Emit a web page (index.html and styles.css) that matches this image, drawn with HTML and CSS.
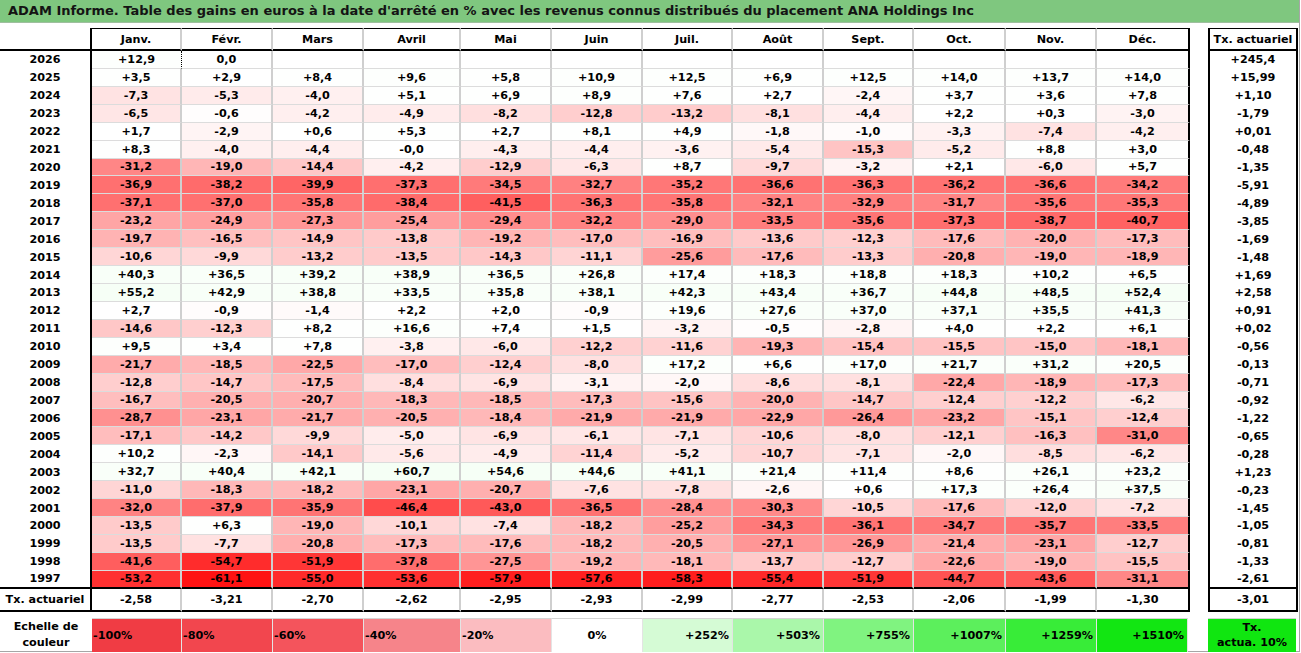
FILE: index.html
```html
<!DOCTYPE html>
<html lang="fr">
<head>
<meta charset="utf-8">
<title>ADAM Informe</title>
<link rel="stylesheet" href="styles.css">
</head>
<body>
<div class="sheet">
  <div class="title">ADAM Informe. Table des gains en euros à la date d'arrêté en % avec les revenus connus distribués du placement ANA Holdings Inc</div>
  <div class="main">
    <div class="row head"><div class="yr"></div><div class="h">Janv.</div><div class="h">Févr.</div><div class="h">Mars</div><div class="h">Avril</div><div class="h">Mai</div><div class="h">Juin</div><div class="h">Juil.</div><div class="h">Août</div><div class="h">Sept.</div><div class="h">Oct.</div><div class="h">Nov.</div><div class="h">Déc.</div><div class="t">Tx. actuariel</div></div>
    <div class="row"><div class="yr">2026</div><div class="v dot">+12,9</div><div class="v">0,0</div><div class="v"></div><div class="v"></div><div class="v"></div><div class="v"></div><div class="v"></div><div class="v"></div><div class="v"></div><div class="v"></div><div class="v"></div><div class="v"></div><div class="t">+245,4</div></div>
    <div class="row"><div class="yr">2025</div><div class="v">+3,5</div><div class="v">+2,9</div><div class="v">+8,4</div><div class="v">+9,6</div><div class="v">+5,8</div><div class="v">+10,9</div><div class="v">+12,5</div><div class="v">+6,9</div><div class="v">+12,5</div><div class="v">+14,0</div><div class="v">+13,7</div><div class="v">+14,0</div><div class="t">+15,99</div></div>
    <div class="row"><div class="yr">2024</div><div class="v">-7,3</div><div class="v">-5,3</div><div class="v">-4,0</div><div class="v">+5,1</div><div class="v">+6,9</div><div class="v">+8,9</div><div class="v">+7,6</div><div class="v">+2,7</div><div class="v">-2,4</div><div class="v">+3,7</div><div class="v">+3,6</div><div class="v">+7,8</div><div class="t">+1,10</div></div>
    <div class="row"><div class="yr">2023</div><div class="v">-6,5</div><div class="v">-0,6</div><div class="v">-4,2</div><div class="v">-4,9</div><div class="v">-8,2</div><div class="v">-12,8</div><div class="v">-13,2</div><div class="v">-8,1</div><div class="v">-4,4</div><div class="v">+2,2</div><div class="v">+0,3</div><div class="v">-3,0</div><div class="t">-1,79</div></div>
    <div class="row"><div class="yr">2022</div><div class="v">+1,7</div><div class="v">-2,9</div><div class="v">+0,6</div><div class="v">+5,3</div><div class="v">+2,7</div><div class="v">+8,1</div><div class="v">+4,9</div><div class="v">-1,8</div><div class="v">-1,0</div><div class="v">-3,3</div><div class="v">-7,4</div><div class="v">-4,2</div><div class="t">+0,01</div></div>
    <div class="row"><div class="yr">2021</div><div class="v">+8,3</div><div class="v">-4,0</div><div class="v">-4,4</div><div class="v">-0,0</div><div class="v">-4,3</div><div class="v">-4,4</div><div class="v">-3,6</div><div class="v">-5,4</div><div class="v">-15,3</div><div class="v">-5,2</div><div class="v">+8,8</div><div class="v">+3,0</div><div class="t">-0,48</div></div>
    <div class="row"><div class="yr">2020</div><div class="v">-31,2</div><div class="v">-19,0</div><div class="v">-14,4</div><div class="v">-4,2</div><div class="v">-12,9</div><div class="v">-6,3</div><div class="v">+8,7</div><div class="v">-9,7</div><div class="v">-3,2</div><div class="v">+2,1</div><div class="v">-6,0</div><div class="v">+5,7</div><div class="t">-1,35</div></div>
    <div class="row"><div class="yr">2019</div><div class="v">-36,9</div><div class="v">-38,2</div><div class="v">-39,9</div><div class="v">-37,3</div><div class="v">-34,5</div><div class="v">-32,7</div><div class="v">-35,2</div><div class="v">-36,6</div><div class="v">-36,3</div><div class="v">-36,2</div><div class="v">-36,6</div><div class="v">-34,2</div><div class="t">-5,91</div></div>
    <div class="row"><div class="yr">2018</div><div class="v">-37,1</div><div class="v">-37,0</div><div class="v">-35,8</div><div class="v">-38,4</div><div class="v">-41,5</div><div class="v">-36,3</div><div class="v">-35,8</div><div class="v">-32,1</div><div class="v">-32,9</div><div class="v">-31,7</div><div class="v">-35,6</div><div class="v">-35,3</div><div class="t">-4,89</div></div>
    <div class="row"><div class="yr">2017</div><div class="v">-23,2</div><div class="v">-24,9</div><div class="v">-27,3</div><div class="v">-25,4</div><div class="v">-29,4</div><div class="v">-32,2</div><div class="v">-29,0</div><div class="v">-33,5</div><div class="v">-35,6</div><div class="v">-37,3</div><div class="v">-38,7</div><div class="v">-40,7</div><div class="t">-3,85</div></div>
    <div class="row"><div class="yr">2016</div><div class="v">-19,7</div><div class="v">-16,5</div><div class="v">-14,9</div><div class="v">-13,8</div><div class="v">-19,2</div><div class="v">-17,0</div><div class="v">-16,9</div><div class="v">-13,6</div><div class="v">-12,3</div><div class="v">-17,6</div><div class="v">-20,0</div><div class="v">-17,3</div><div class="t">-1,69</div></div>
    <div class="row"><div class="yr">2015</div><div class="v">-10,6</div><div class="v">-9,9</div><div class="v">-13,2</div><div class="v">-13,5</div><div class="v">-14,3</div><div class="v">-11,1</div><div class="v">-25,6</div><div class="v">-17,6</div><div class="v">-13,3</div><div class="v">-20,8</div><div class="v">-19,0</div><div class="v">-18,9</div><div class="t">-1,48</div></div>
    <div class="row"><div class="yr">2014</div><div class="v">+40,3</div><div class="v">+36,5</div><div class="v">+39,2</div><div class="v">+38,9</div><div class="v">+36,5</div><div class="v">+26,8</div><div class="v">+17,4</div><div class="v">+18,3</div><div class="v">+18,8</div><div class="v">+18,3</div><div class="v">+10,2</div><div class="v">+6,5</div><div class="t">+1,69</div></div>
    <div class="row"><div class="yr">2013</div><div class="v">+55,2</div><div class="v">+42,9</div><div class="v">+38,8</div><div class="v">+33,5</div><div class="v">+35,8</div><div class="v">+38,1</div><div class="v">+42,3</div><div class="v">+43,4</div><div class="v">+36,7</div><div class="v">+44,8</div><div class="v">+48,5</div><div class="v">+52,4</div><div class="t">+2,58</div></div>
    <div class="row"><div class="yr">2012</div><div class="v">+2,7</div><div class="v">-0,9</div><div class="v">-1,4</div><div class="v">+2,2</div><div class="v">+2,0</div><div class="v">-0,9</div><div class="v">+19,6</div><div class="v">+27,6</div><div class="v">+37,0</div><div class="v">+37,1</div><div class="v">+35,5</div><div class="v">+41,3</div><div class="t">+0,91</div></div>
    <div class="row"><div class="yr">2011</div><div class="v">-14,6</div><div class="v">-12,3</div><div class="v">+8,2</div><div class="v">+16,6</div><div class="v">+7,4</div><div class="v">+1,5</div><div class="v">-3,2</div><div class="v">-0,5</div><div class="v">-2,8</div><div class="v">+4,0</div><div class="v">+2,2</div><div class="v">+6,1</div><div class="t">+0,02</div></div>
    <div class="row"><div class="yr">2010</div><div class="v">+9,5</div><div class="v">+3,4</div><div class="v">+7,8</div><div class="v">-3,8</div><div class="v">-6,0</div><div class="v">-12,2</div><div class="v">-11,6</div><div class="v">-19,3</div><div class="v">-15,4</div><div class="v">-15,5</div><div class="v">-15,0</div><div class="v">-18,1</div><div class="t">-0,56</div></div>
    <div class="row"><div class="yr">2009</div><div class="v">-21,7</div><div class="v">-18,5</div><div class="v">-22,5</div><div class="v">-17,0</div><div class="v">-12,4</div><div class="v">-8,0</div><div class="v">+17,2</div><div class="v">+6,6</div><div class="v">+17,0</div><div class="v">+21,7</div><div class="v">+31,2</div><div class="v">+20,5</div><div class="t">-0,13</div></div>
    <div class="row"><div class="yr">2008</div><div class="v">-12,8</div><div class="v">-14,7</div><div class="v">-17,5</div><div class="v">-8,4</div><div class="v">-6,9</div><div class="v">-3,1</div><div class="v">-2,0</div><div class="v">-8,6</div><div class="v">-8,1</div><div class="v">-22,4</div><div class="v">-18,9</div><div class="v">-17,3</div><div class="t">-0,71</div></div>
    <div class="row"><div class="yr">2007</div><div class="v">-16,7</div><div class="v">-20,5</div><div class="v">-20,7</div><div class="v">-18,3</div><div class="v">-18,5</div><div class="v">-17,3</div><div class="v">-15,6</div><div class="v">-20,0</div><div class="v">-14,7</div><div class="v">-12,4</div><div class="v">-12,2</div><div class="v">-6,2</div><div class="t">-0,92</div></div>
    <div class="row"><div class="yr">2006</div><div class="v">-28,7</div><div class="v">-23,1</div><div class="v">-21,7</div><div class="v">-20,5</div><div class="v">-18,4</div><div class="v">-21,9</div><div class="v">-21,9</div><div class="v">-22,9</div><div class="v">-26,4</div><div class="v">-23,2</div><div class="v">-15,1</div><div class="v">-12,4</div><div class="t">-1,22</div></div>
    <div class="row"><div class="yr">2005</div><div class="v">-17,1</div><div class="v">-14,2</div><div class="v">-9,9</div><div class="v">-5,0</div><div class="v">-6,9</div><div class="v">-6,1</div><div class="v">-7,1</div><div class="v">-10,6</div><div class="v">-8,0</div><div class="v">-12,1</div><div class="v">-16,3</div><div class="v">-31,0</div><div class="t">-0,65</div></div>
    <div class="row"><div class="yr">2004</div><div class="v">+10,2</div><div class="v">-2,3</div><div class="v">-14,1</div><div class="v">-5,6</div><div class="v">-4,9</div><div class="v">-11,4</div><div class="v">-5,2</div><div class="v">-10,7</div><div class="v">-7,1</div><div class="v">-2,0</div><div class="v">-8,5</div><div class="v">-6,2</div><div class="t">-0,28</div></div>
    <div class="row"><div class="yr">2003</div><div class="v">+32,7</div><div class="v">+40,4</div><div class="v">+42,1</div><div class="v">+60,7</div><div class="v">+54,6</div><div class="v">+44,6</div><div class="v">+41,1</div><div class="v">+21,4</div><div class="v">+11,4</div><div class="v">+8,6</div><div class="v">+26,1</div><div class="v">+23,2</div><div class="t">+1,23</div></div>
    <div class="row"><div class="yr">2002</div><div class="v">-11,0</div><div class="v">-18,3</div><div class="v">-18,2</div><div class="v">-23,1</div><div class="v">-20,7</div><div class="v">-7,6</div><div class="v">-7,8</div><div class="v">-2,6</div><div class="v">+0,6</div><div class="v">+17,3</div><div class="v">+26,4</div><div class="v">+37,5</div><div class="t">-0,23</div></div>
    <div class="row"><div class="yr">2001</div><div class="v">-32,0</div><div class="v">-37,9</div><div class="v">-35,9</div><div class="v">-46,4</div><div class="v">-43,0</div><div class="v">-36,5</div><div class="v">-28,4</div><div class="v">-30,3</div><div class="v">-10,5</div><div class="v">-17,6</div><div class="v">-12,0</div><div class="v">-7,2</div><div class="t">-1,45</div></div>
    <div class="row"><div class="yr">2000</div><div class="v">-13,5</div><div class="v">+6,3</div><div class="v">-19,0</div><div class="v">-10,1</div><div class="v">-7,4</div><div class="v">-18,2</div><div class="v">-25,2</div><div class="v">-34,3</div><div class="v">-36,1</div><div class="v">-34,7</div><div class="v">-35,7</div><div class="v">-33,5</div><div class="t">-1,05</div></div>
    <div class="row"><div class="yr">1999</div><div class="v">-13,5</div><div class="v">-7,7</div><div class="v">-20,8</div><div class="v">-17,3</div><div class="v">-17,6</div><div class="v">-18,2</div><div class="v">-20,5</div><div class="v">-27,1</div><div class="v">-26,9</div><div class="v">-21,4</div><div class="v">-23,1</div><div class="v">-12,7</div><div class="t">-0,81</div></div>
    <div class="row"><div class="yr">1998</div><div class="v">-41,6</div><div class="v">-54,7</div><div class="v">-51,9</div><div class="v">-37,8</div><div class="v">-27,5</div><div class="v">-19,2</div><div class="v">-18,1</div><div class="v">-13,7</div><div class="v">-12,7</div><div class="v">-22,6</div><div class="v">-19,0</div><div class="v">-15,5</div><div class="t">-1,33</div></div>
    <div class="row last"><div class="yr">1997</div><div class="v">-53,2</div><div class="v">-61,1</div><div class="v">-55,0</div><div class="v">-53,6</div><div class="v">-57,9</div><div class="v">-57,6</div><div class="v">-58,3</div><div class="v">-55,4</div><div class="v">-51,9</div><div class="v">-44,7</div><div class="v">-43,6</div><div class="v">-31,1</div><div class="t">-2,61</div></div>
    <div class="row total"><div class="yr">Tx. actuariel</div><div class="s">-2,58</div><div class="s">-3,21</div><div class="s">-2,70</div><div class="s">-2,62</div><div class="s">-2,95</div><div class="s">-2,93</div><div class="s">-2,99</div><div class="s">-2,77</div><div class="s">-2,53</div><div class="s">-2,06</div><div class="s">-1,99</div><div class="s">-1,30</div><div class="t">-3,01</div></div>
  </div>
  <div class="legend">
    <div class="lab">Echelle de<br>couleur</div>
    <div class="k neg k1">-100%</div>
    <div class="k neg k2">-80%</div>
    <div class="k neg k3">-60%</div>
    <div class="k neg k4">-40%</div>
    <div class="k neg k5">-20%</div>
    <div class="k zero k6">0%</div>
    <div class="k pos k7">+252%</div>
    <div class="k pos k8">+503%</div>
    <div class="k pos k9">+755%</div>
    <div class="k pos k10">+1007%</div>
    <div class="k pos k11">+1259%</div>
    <div class="k pos k12">+1510%</div>
    <div class="ktx">Tx.<br>actua. 10%</div>
  </div>
</div>
<script src="script.js"></script>
</body>
</html>
```

FILE: styles.css
```css
* { box-sizing: border-box; }
html, body { margin: 0; padding: 0; background: #fff; }
body {
  font-family: "DejaVu Sans", sans-serif;
  font-weight: bold;
  font-size: 11.2px;
  color: #000;
}
.sheet {
  width: 1300px;
  height: 652px;
  border-right: 1px solid #a6a6a6;
  border-bottom: 1px solid #a6a6a6;
}
.title {
  height: 23px;
  background: #7fc77f;
  border-bottom: 1px solid #9fbf9f;
  padding-left: 8px;
  font-size: 13px;
  line-height: 22px;
  color: #141414;
  white-space: nowrap;
}
.main {
  display: grid;
  grid-template-columns: 92px 90px 91px 91px 97px 91px 91px 90px 91px 90px 92px 91px 93px 108px;
  grid-template-rows: 23px repeat(30, 17.93px) 23px;
  margin-top: 5px;
}
.row { display: contents; }
.row > div {
  display: flex;
  align-items: center;
  justify-content: center;
  white-space: nowrap;
}
.yr { border-right: 2px solid #000; }
.h {
  border-top: 1px solid #000;
  border-bottom: 2px solid #000;
  border-right: 2px solid #cfcfcf;
}
.head .yr { border-bottom: 2px solid #000; }
.v {
  border-right: 2px solid #cfcfcf;
  border-bottom: 1px solid #dcdcdc;
  background: #fff;
}
.v.dot { border-right: 1px dotted #000; }
.s { border-right: 2px solid #cfcfcf; border-bottom: 2px solid #000; }
.row > div:nth-child(13) { border-right: 2px solid #000; }
.t {
  margin-left: 18px;
  border-left: 2px solid #000;
  border-right: 2px solid #000;
}
.head .t { border-top: 1px solid #000; border-bottom: 2px solid #000; }
.last > div { border-bottom: 2px solid #000; }
.total > div { border-bottom: 2px solid #000; }

.legend {
  display: grid;
  grid-template-columns: 92px 90px 91px 91px 97px 91px 91px 90px 91px 90px 92px 91px 91px 110px;
  grid-template-rows: 34px;
  margin-top: 6px;
}
.lab {
  display: flex;
  align-items: center;
  justify-content: center;
  text-align: center;
  line-height: 16px;
}
.k {
  display: flex;
  align-items: center;
  border-top: 1px solid #d4d4d4;
  border-right: 1px solid #e4e4e4;
  white-space: nowrap;
}
.neg { justify-content: flex-start; padding-left: 1px; }
.zero { justify-content: center; }
.pos { justify-content: flex-end; padding-right: 3px; }
.k1 { background: #f03c44; }
.k2 { background: #f2464e; }
.k3 { background: #f4545c; }
.k4 { background: #f6848a; }
.k5 { background: #fbbcc0; }
.k6 { background: #ffffff; }
.k7 { background: #d5fbd5; }
.k8 { background: #aaf7aa; }
.k9 { background: #80f380; }
.k10 { background: #5cef5c; }
.k11 { background: #38ec38; }
.k12 { background: #12e612; }
.ktx {
  margin-left: 20px;
  margin-right: 2px;
  background: #10e610;
  border-top: 1px solid #d4d4d4;
  display: flex;
  align-items: center;
  justify-content: center;
  text-align: center;
  line-height: 15px;
}
```

FILE: script.js
```js
document.querySelectorAll('.v').forEach(function (el) {
  var t = el.textContent.trim();
  if (!t) return;
  var v = parseFloat(t.replace(',', '.'));
  var r, g, b;
  if (v < 0) {
    var f = Math.min(-v / 66, 1);
    r = 255;
    g = b = Math.round(255 * (1 - f));
  } else {
    g = 255;
    r = b = Math.round(255 - v * 0.17);
  }
  el.style.backgroundColor = 'rgb(' + r + ',' + g + ',' + b + ')';
});
```
